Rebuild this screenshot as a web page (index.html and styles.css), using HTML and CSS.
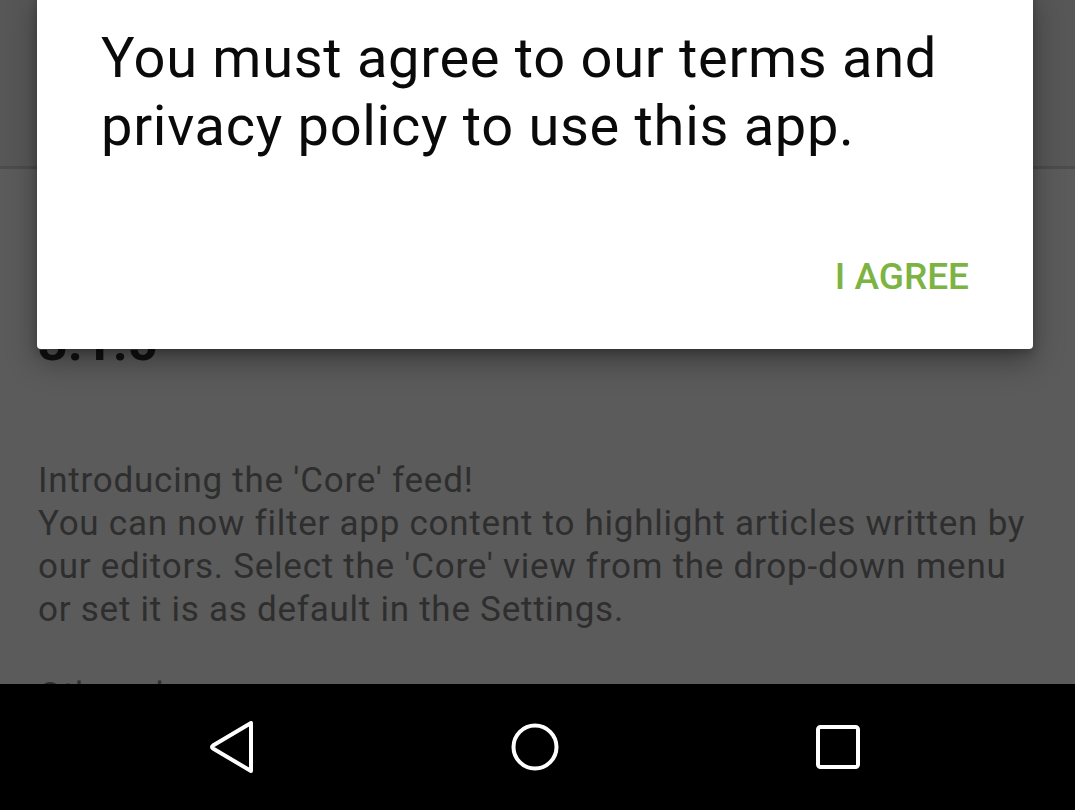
FILE: index.html
```html
<!DOCTYPE html>
<html lang="en">
<head>
<meta charset="utf-8">
<title>Terms dialog</title>
<link rel="stylesheet" href="styles.css">
</head>
<body>
<div class="screen">
  <div class="app">
    <div class="toolbar"></div>
    <div class="content">
      <h1 class="version">3.1.5</h1>
      <p class="notes">Introducing the 'Core' feed!<br>You can now filter app content to highlight articles written by our editors. Select the 'Core' view from the drop-down menu or set it is as default in the Settings.<br><br>Other changes</p>
    </div>
  </div>
  <div class="dialog">
    <p class="message">You must agree to our terms and privacy policy to use this app.</p>
    <div class="actions">
      <span class="btn">I AGREE</span>
    </div>
  </div>
  <nav class="navbar">
    <div class="nav-item">
      <svg width="50" height="52" viewBox="0 0 50 52"><path d="M44 2 L44 50 L6 27.5 Q4 26 6 24.5 Z" fill="none" stroke="#fff" stroke-width="4" stroke-linejoin="round"/></svg>
    </div>
    <div class="nav-item">
      <svg width="50" height="50" viewBox="0 0 50 50"><circle cx="25" cy="25" r="21.5" fill="none" stroke="#fff" stroke-width="4"/></svg>
    </div>
    <div class="nav-item">
      <svg width="46" height="46" viewBox="0 0 46 46"><rect x="3" y="3" width="40" height="40" rx="2.5" fill="none" stroke="#fff" stroke-width="4"/></svg>
    </div>
  </nav>
</div>
</body>
</html>
```
FILE: styles.css
```css
html, body {
  margin: 0;
  padding: 0;
}
body {
  width: 1075px;
  height: 810px;
  overflow: hidden;
  background: #5a5a5a;
  font-family: Roboto, "Noto Sans", sans-serif;
}
.screen {
  position: relative;
  width: 1075px;
  height: 810px;
  display: flex;
  flex-direction: column;
}
.app {
  flex: 1;
  display: flex;
  flex-direction: column;
  overflow: hidden;
  background: #5b5b5b;
}
.toolbar {
  height: 166px;
  flex: none;
  background: #575757;
  border-bottom: 3px solid #4c4c4c;
}
.content {
  padding: 0 36px 0 38px;
}
.version {
  margin: 146px 0 0;
  font-size: 52px;
  line-height: 56px;
  font-weight: 700;
  color: #111;
}
.notes {
  margin: 88px 0 0;
  font-size: 35px;
  line-height: 43px;
  letter-spacing: 0.75px;
  color: #2e2e2e;
}
.dialog {
  position: absolute;
  left: 37px;
  top: -10px;
  width: 996px;
  box-sizing: border-box;
  padding: 34px 64px 48px 64px;
  background: #fff;
  border-radius: 4px;
  box-shadow: 0 12px 30px rgba(0, 0, 0, 0.35), 0 4px 8px rgba(0, 0, 0, 0.2);
  display: flex;
  flex-direction: column;
}
.message {
  margin: 0;
  font-size: 56px;
  line-height: 68px;
  letter-spacing: 0.7px;
  color: #0a0a0a;
}
.actions {
  margin-top: 93px;
  display: flex;
  justify-content: flex-end;
}
.btn {
  font-size: 37px;
  line-height: 48px;
  font-weight: 500;
  color: #7cb342;
}
.navbar {
  flex: none;
  height: 126px;
  background: #000;
  display: flex;
  justify-content: center;
  align-items: center;
  padding-right: 6px;
}
.nav-item {
  width: 303px;
  display: flex;
  justify-content: center;
  align-items: center;
}
.nav-item svg {
  display: block;
}
```
